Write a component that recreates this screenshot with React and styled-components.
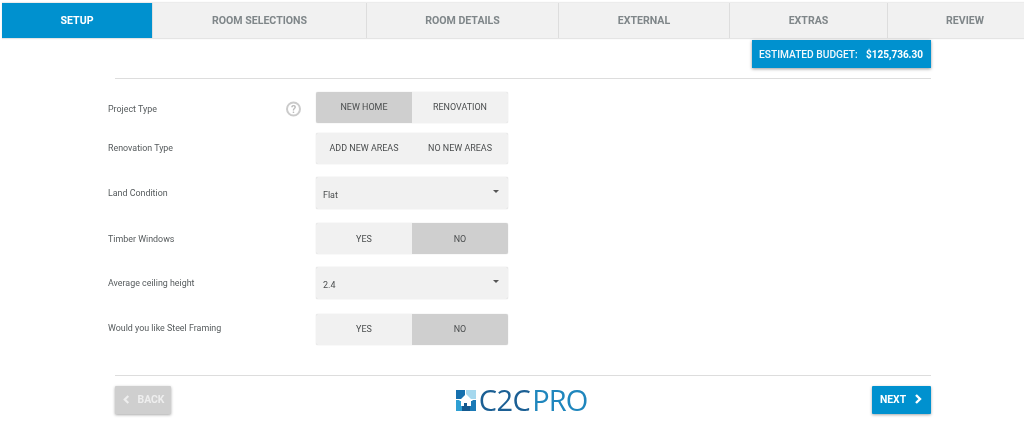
import React from "react";
import styled, { createGlobalStyle } from "styled-components";

const Global = createGlobalStyle`
  html, body { margin: 0; padding: 0; background: #fff; }
  body { font-family: Roboto, "Liberation Sans", sans-serif; width: 1024px; height: 426px; overflow: hidden; }
`;
const Page = styled.div`
  display: flex; flex-direction: column; width: 1024px; height: 426px; padding-top: 3px; box-sizing: border-box;
  filter: blur(0.4px);
`;
const Tabs = styled.nav`
  display: flex; height: 35px; margin-left: 2px; background: #f1f1f1; box-shadow: 0 1px 1px #e4e4e4, 0 -1px 1px #ececec;
`;
const Tab = styled.div`
  width: ${p => p.$w}px; display: flex; align-items: center; justify-content: center; box-sizing: border-box;
  font-size: 10.6px; font-weight: 700;
  color: ${p => (p.$active ? "#fff" : "#7f8689")};
  background: ${p => (p.$active ? "#0091cf" : "transparent")};
  border-right: ${p => (p.$last ? "none" : p.$active ? "1px solid #dfdfdf" : "1.5px solid #dddddd")};
  padding-left: ${p => p.$shift || 0}px;
`;
const Body = styled.main`
  display: flex; flex-direction: column; margin-left: 115px; width: 816px;
`;
const BudgetBar = styled.div`
  display: flex; justify-content: flex-end; height: 28px; margin-top: 2px;
`;
const Budget = styled.div`
  width: 179px; display: flex; align-items: center; justify-content: space-between; box-sizing: border-box; padding: 0 8px 0 7px;
  background: #0091cf; color: #f2f8fc; font-size: 10.2px; font-weight: 500; box-shadow: 0 1px 3px rgba(0,0,0,.4);
`;
const Amount = styled.span` font-weight: 700; font-size: 10px; color: #fff; `;
const Rule = styled.hr`
  border: 0; height: 1px; background: #dddddd; margin: ${p => p.$m}; width: 100%;
`;
const Form = styled.div`
  display: flex; flex-direction: column; margin-left: -7px; padding-top: 13px;
`;
const Row = styled.div`
  display: grid; grid-template-columns: 178px 30px 192px; align-items: center;
  height: ${p => p.$h || 31}px; margin-bottom: ${p => p.$after || 0}px;
`;
const Label = styled.div`
  font-size: 8.9px; color: #555a5c; transform: translateY(${p => p.$dy || 0}px);
`;
const Help = styled.div`
  width: 15px; height: 15px; border: 2px solid #cbcbcb; border-radius: 50%; box-sizing: border-box;
  display: flex; align-items: center; justify-content: center; color: #bcbcbc; font-size: 10.5px; font-weight: 700; transform: translateY(1.5px);
`;
const Toggle = styled.div`
  grid-column: 3; display: grid; grid-template-columns: 96px 96px; height: 100%; border-radius: 2px; overflow: hidden;
  background: #f1f1f1; box-shadow: 0 0 1px rgba(0,0,0,.25);
`;
const Option = styled.div`
  display: flex; align-items: center; justify-content: center; font-size: 8.95px; color: #4a4d4e; padding-bottom: ${p => (p.$flush ? 0 : 1)}px;
  background: ${p => (p.$on ? "#cfcfcf" : "transparent")};
  & + & { border-left: ${p => (p.$split ? "1px solid #e2e2e2" : "none")}; }
`;
const Select = styled.div`
  grid-column: 3; height: 100%; display: flex; align-items: center; justify-content: space-between; padding: 3px 9px 0 7px; box-sizing: border-box;
  background: #f1f1f1; border-radius: 2px; box-shadow: 0 0 1px rgba(0,0,0,.3); font-size: 8.95px; color: #4a4d4e;
`;
const Caret = styled.span`
  width: 0; height: 0; border-left: 3.5px solid transparent; border-right: 3.5px solid transparent; border-top: 3.5px solid #555;
  margin-top: -6px;
`;
const Footer = styled.footer`
  display: flex; align-items: center; justify-content: space-between; height: 28px;
`;
const NavButton = styled.div`
  height: 28px; width: ${p => p.$w}px; display: flex; align-items: center; justify-content: center; gap: ${p => p.$gap}px; box-sizing: border-box; padding-bottom: 2px;
  background: ${p => (p.$off ? "#cfcfcf" : "#0091cf")}; color: ${p => (p.$off ? "#eeeeee" : "#fff")};
  font-size: 10.4px; font-weight: 700; border-radius: 1px; box-shadow: 0 1px 3px rgba(0,0,0,.35);
`;
const Logo = styled.div`
  display: flex; align-items: center; gap: 3px;
`;
const Word = styled.span`
  font-family: "Open Sans", sans-serif; font-size: 29px; font-weight: ${p => p.$weight}; line-height: 28px; letter-spacing: ${p => p.$ls}px; color: ${p => p.$c}; margin-right: ${p => p.$mr || 0}px;
`;

const Chevron = ({ left, size = 10, w = 2.4 }) => (
  <svg width={size} height={size} viewBox="0 0 10 10" fill="none" stroke="currentColor" strokeWidth={w}>
    <path d={left ? "M7 1 3 5l4 4" : "M3 1l4 4-4 4"} />
  </svg>
);
const LogoMark = () => (
  <svg width="20" height="21" viewBox="0 0 20 21">
    <rect x="0" y="0" width="9" height="9" fill="#1670ae" />
    <rect x="10" y="0" width="10" height="9" fill="#a5d8ee" />
    <rect x="0" y="10" width="6" height="11" fill="#2e9fd3" />
    <rect x="6" y="15" width="8" height="6" fill="#14598f" />
    <rect x="14" y="10" width="6" height="11" fill="#1b7ab6" />
    <path d="M3 11 10 4l7 7h-2v5H5v-5z" fill="#fff" />
    <rect x="8" y="13" width="3" height="5" fill="#14598f" />
  </svg>
);

const tabs = [
  ["SETUP", 151, 0], ["ROOM SELECTIONS", 214, 0], ["ROOM DETAILS", 192, 0], ["EXTERNAL", 171, 0], ["EXTRAS", 158, 0], ["REVIEW", 136, 18],
];

export default function App() {
  return (
    <Page>
      <Global />
      <Tabs>
        {tabs.map(([t, w, s], i) => (
          <Tab key={t} $w={w} $shift={s} $active={i === 0} $last={i === 5}>{t}</Tab>
        ))}
      </Tabs>
      <Body>
        <BudgetBar>
          <Budget><span>ESTIMATED BUDGET:</span><Amount>$125,736.30</Amount></Budget>
        </BudgetBar>
        <Rule $m="10px 0 0" />
        <Form>
          <Row $after={10}>
            <Label $dy={1}>Project Type</Label>
            <Help>?</Help>
            <Toggle><Option $on>NEW HOME</Option><Option>RENOVATION</Option></Toggle>
          </Row>
          <Row $after={13}>
            <Label $dy={-1}>Renovation Type</Label>
            <Toggle><Option>ADD NEW AREAS</Option><Option $split>NO NEW AREAS</Option></Toggle>
          </Row>
          <Row $h={32} $after={14}>
            <Label>Land Condition</Label>
            <Select>Flat<Caret /></Select>
          </Row>
          <Row $after={13}>
            <Label>Timber Windows</Label>
            <Toggle><Option $flush>YES</Option><Option $flush $on>NO</Option></Toggle>
          </Row>
          <Row $h={32} $after={15}>
            <Label>Average ceiling height</Label>
            <Select>2.4<Caret /></Select>
          </Row>
          <Row>
            <Label $dy={-2}>Would you like Steel Framing</Label>
            <Toggle><Option>YES</Option><Option $on>NO</Option></Toggle>
          </Row>
        </Form>
        <Rule $m="30px 0 10px" />
        <Footer>
          <NavButton $off $w={56} $gap={7}><Chevron left size={9} />BACK</NavButton>
          <Logo>
            <LogoMark />
            <Word $c="#1b5f94" $weight={500} $ls={-0.5} $mr={-1}>C2C</Word>
            <Word $c="#1f86bd" $weight={500} $ls={-1}>PRO</Word>
          </Logo>
          <NavButton $w={59} $gap={7}>NEXT<Chevron /></NavButton>
        </Footer>
      </Body>
    </Page>
  );
}
